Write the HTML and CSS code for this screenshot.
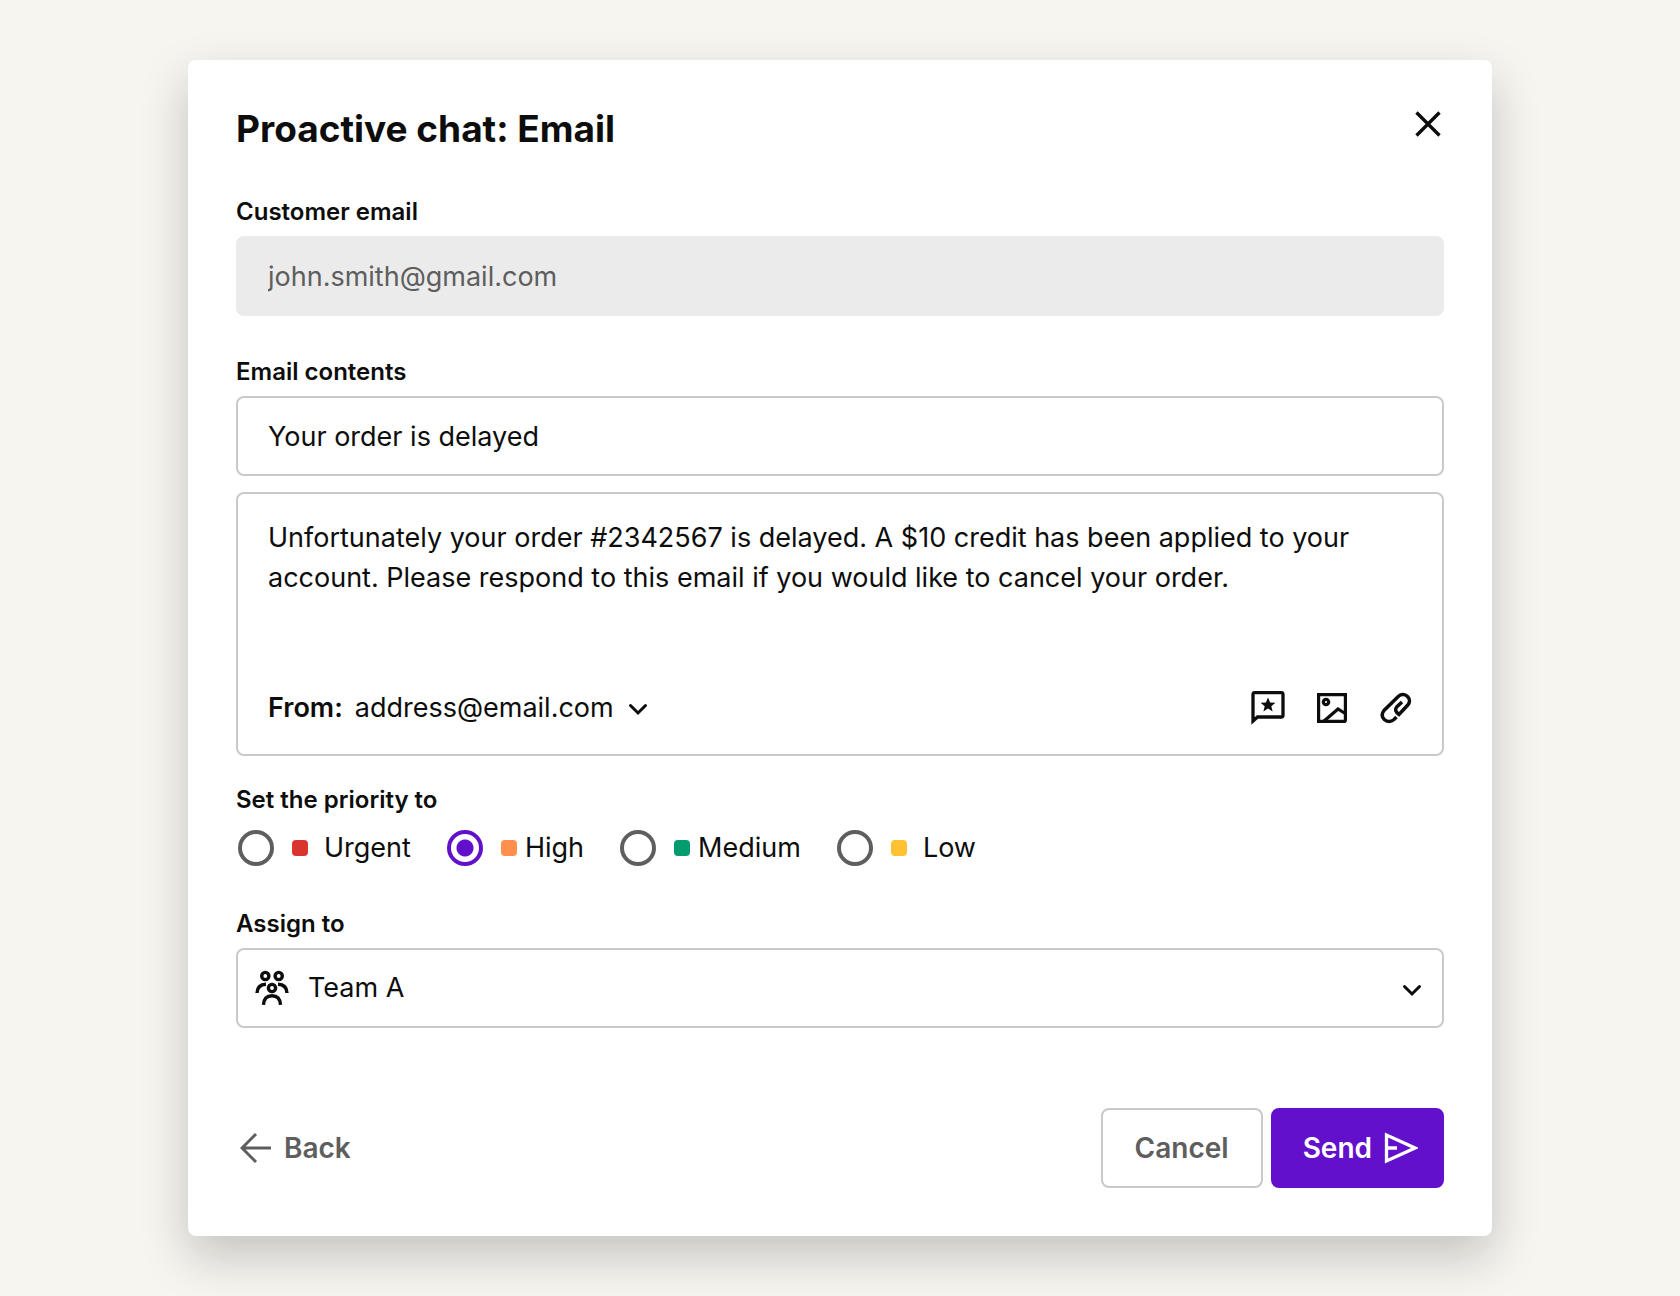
FILE: index.html
```html
<!DOCTYPE html>
<html lang="en">
<head>
    <meta charset="UTF-8">
    <meta name="viewport" content="width=device-width, initial-scale=1.0">
    <title>Proactive chat: Email</title>
    <link rel="stylesheet" href="styles.css">
</head>

<body>
    <form class="modal">
        <header class="modal-header">
            <h1>Proactive chat: Email</h1>
            <button type="button" class="icon-btn" aria-label="Close">
                <svg width="32" height="32" viewBox="0 0 32 32" stroke-width="3.400"><path d="M4.500 4.500l23 23M27.500 4.500l-23 23"/></svg>
            </button>
        </header>

        <div class="field">
            <label class="field-label" for="customer-email">Customer email</label>
            <input class="text-input" type="email" id="customer-email" value="john.smith@gmail.com" disabled>
        </div>

        <div class="field">
            <label class="field-label" for="subject">Email contents</label>
            <input class="text-input" type="text" id="subject" value="Your order is delayed">
            <div class="composer">
                <textarea class="message" rows="4" aria-label="Message">Unfortunately your order #2342567 is delayed. A $10 credit has been applied to your account. Please respond to this email if you would like to cancel your order.</textarea>
                <div class="composer-bar">
                    <label class="from-label" for="from">From:</label>
                    <select class="from-select" id="from">
                        <option>address@email.com</option>
                    </select>
                    <svg class="chevron" width="24" height="24" viewBox="0 0 24 24" stroke-width="3"><path d="M4.500 9.500l7.500 7.500 7.500-7.500"/></svg>
                    <div class="tools">
                        <button type="button" class="icon-btn" aria-label="Saved replies">
                            <svg width="36" height="36" viewBox="0 0 36 36" stroke-width="3.300">
                                <path d="M3 31V4.500q0-1.800 1.800-1.800h26.400q1.800 0 1.800 1.800v20.700q0 1.800-1.800 1.800H7.500z"/>
                                <path class="solid" d="M18 7.500l2.100 4.900 5.300.4-4.100 3.400 1.300 5.200-4.600-2.800-4.600 2.800 1.300-5.200-4.100-3.400 5.300-.4z"/>
                            </svg>
                        </button>
                        <button type="button" class="icon-btn" aria-label="Insert image">
                            <svg width="36" height="36" viewBox="0 0 36 36" stroke-width="3.200">
                                <path d="M4.600 4.600h26.800V29.900q0 1.500-1.500 1.500H4.600z"/>
                                <circle cx="12" cy="12" r="2.700"/>
                                <path d="M9.500 31.500l14.500-12.500 8 5"/>
                            </svg>
                        </button>
                        <button type="button" class="icon-btn" aria-label="Attach file">
                            <svg width="36" height="36" viewBox="0 0 36 36" stroke-width="3.500">
                                <path d="M18.500 27L16 29.500C13 32 9 32 6.300 29.500C3.700 27 3.700 23.500 6 20.500L20.500 6.200C23 4 27 4 29.500 6.500C32 9 32 12.500 29.800 15L21 24.500C17.500 22 16.800 19.500 18.700 17L24 12"/>
                            </svg>
                        </button>
                    </div>
                </div>
            </div>
        </div>

        <fieldset class="priority">
            <legend class="field-label">Set the priority to</legend>
            <div class="options">
                <label class="option spaced"><input type="radio" name="priority"><span class="swatch urgent"></span>Urgent</label>
                <label class="option"><input type="radio" name="priority" checked><span class="swatch high"></span>High</label>
                <label class="option"><input type="radio" name="priority"><span class="swatch medium"></span>Medium</label>
                <label class="option spaced"><input type="radio" name="priority"><span class="swatch low"></span>Low</label>
            </div>
        </fieldset>

        <div class="field">
            <label class="field-label" for="assignee">Assign to</label>
            <div class="select-wrap">
                <svg width="36" height="36" viewBox="0 0 36 36" stroke-width="3.400">
                    <circle cx="11.300" cy="6" r="3.600"/>
                    <circle cx="24.700" cy="6" r="3.600"/>
                    <circle cx="18" cy="18" r="3.600"/>
                    <path d="M3 23C3.200 17.500 6.500 14.500 12 14.300M33 23C32.800 17.500 29.500 14.500 24 14.300M9.500 34.800C9.800 29 13 25.800 18 25.800S26.200 29 26.500 34.800"/>
                </svg>
                <select class="text-input" id="assignee">
                    <option>Team A</option>
                </select>
                <svg class="chevron" width="24" height="24" viewBox="0 0 24 24" stroke-width="3"><path d="M4.500 10.500l7.500 7.500 7.500-7.500"/></svg>
            </div>
        </div>

        <footer class="modal-footer">
            <button type="button" class="back">
                <svg width="32" height="32" viewBox="0 0 32 32" stroke-width="3"><path d="M31 16H3M16 2L2 16l14 14"/></svg>
                Back
            </button>
            <button type="button" class="btn">Cancel</button>
            <button type="submit" class="btn primary">
                Send
                <svg width="34" height="34" viewBox="0 0 34 34" stroke-width="3.300"><path d="M2.500 4v26L31 17zM3 17h10"/></svg>
            </button>
        </footer>
    </form>
</body>
</html>
```

FILE: styles.css
```css
* {
    box-sizing: border-box;
    margin: 0;
    padding: 0;
}

body {
    min-height: 100vh;
    padding: 60px 188px;
    background: #f6f5f0;
    color: #0d0d0d;
    font-family: Inter, sans-serif;
    font-size: 27px;
    line-height: 40px;
}

button, input, select, textarea {
    font: inherit;
    color: inherit;
}

button, select {
    cursor: pointer;
}

svg {
    display: block;
    flex: none;
    fill: none;
    stroke: currentColor;
}

.modal {
    display: flex;
    flex-direction: column;
    padding: 48px;
    background: #fff;
    border-radius: 8px;
    box-shadow: 0 20px 48px rgba(20, 20, 16, 0.22);
}

.modal-header {
    display: flex;
    justify-content: space-between;
    align-items: flex-start;
    margin-bottom: 46px;
}

h1 {
    font-size: 37px;
    line-height: 42px;
    font-weight: 700;
}

.icon-btn {
    border: none;
    background: none;
}

.field {
    display: flex;
    flex-direction: column;
    margin-bottom: 40px;
}

.field-label {
    margin-bottom: 8px;
    font-size: 24px;
    line-height: 32px;
    font-weight: 600;
}

.text-input {
    width: 100%;
    height: 80px;
    padding: 0 30px;
    border: 2px solid #c9c9c9;
    border-radius: 8px;
    background: #fff;
    appearance: none;
}

.text-input:disabled {
    border-color: #ebebeb;
    background: #ebebeb;
    color: #5e5e5e;
}

.composer {
    margin-top: 16px;
    padding: 24px 28px 26px 30px;
    border: 2px solid #c9c9c9;
    border-radius: 8px;
}

.message {
    display: block;
    width: 100%;
    border: none;
    outline: none;
    resize: none;
    background: none;
}

.composer-bar {
    display: flex;
    align-items: center;
    gap: 12px;
    margin-top: 10px;
}

.from-label {
    font-weight: 600;
}

.from-select {
    border: none;
    background: none;
    appearance: none;
}

.tools {
    display: flex;
    gap: 28px;
    margin-left: auto;
}

.solid {
    fill: currentColor;
    stroke: none;
}

.priority {
    margin-top: -12px;
    margin-bottom: 40px;
    border: none;
}

.options {
    display: flex;
    gap: 36px;
    padding: 4px 2px 0;
}

.option {
    display: flex;
    align-items: center;
    gap: 8px;
}

.option.spaced {
    gap: 16px;
}

.option input {
    width: 36px;
    height: 36px;
    margin-right: 10px;
    border: 4px solid #5e5e5e;
    border-radius: 50%;
    appearance: none;
}

.option.spaced input {
    margin-right: 2px;
}

.option input:checked {
    border-color: #6210cc;
    background: radial-gradient(circle, #6210cc 8px, #fff 9px);
}

.swatch {
    width: 16px;
    height: 16px;
    border-radius: 4px;
}

.urgent {
    background: #d9342e;
}

.high {
    background: #ff8f4d;
}

.medium {
    background: #049b6f;
}

.low {
    background: #ffc233;
}

.select-wrap {
    display: grid;
    align-items: center;
}

/* icons share the grid cell with the select */
.select-wrap > * {
    grid-area: 1 / 1;
}

.select-wrap svg {
    z-index: 1;
    margin-left: 18px;
    pointer-events: none;
}

.select-wrap .chevron {
    justify-self: end;
    margin-right: 20px;
}

.chevron {
    stroke-linecap: round;
}

.select-wrap select {
    padding-left: 70px;
}

.modal-footer {
    display: flex;
    gap: 8px;
    margin-top: 40px;
}

.back, .btn {
    display: flex;
    align-items: center;
    gap: 12px;
    color: #5e5e5e;
    font-size: 28px;
    font-weight: 600;
}

.back {
    margin-right: auto;
    padding-left: 4px;
    border: none;
    background: none;
}

.btn {
    height: 80px;
    padding: 0 32px;
    border: 2px solid #c9c9c9;
    border-radius: 8px;
    background: #fff;
}

.primary {
    padding: 0 24px 0 30px;
    border-color: #6210cc;
    background: #6210cc;
    color: #fff;
}
```
